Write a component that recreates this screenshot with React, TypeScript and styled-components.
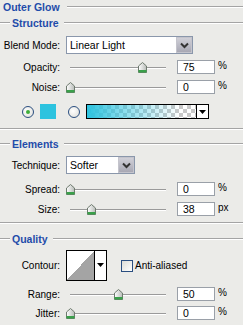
import styled, { createGlobalStyle } from 'styled-components';

const GlobalStyle = createGlobalStyle`
  html, body {
    margin: 0;
    padding: 0;
    background: #ebebe8;
  }
  body {
    font-family: 'Liberation Sans', Arial, sans-serif;
    font-size: 10px;
    color: #000000;
  }
`;

const Panel = styled.div`
  width: 243px;
  height: 325px;
  display: flex;
  flex-direction: column;
  overflow: hidden;
`;

const Header = styled.div<{ $top: number }>`
  display: flex;
  align-items: center;
  height: 12px;
  margin-top: ${(p) => p.$top}px;
`;

const Etch = styled.div`
  height: 1px;
  background: #a4a4a4;
  border-bottom: 1px solid #ffffff;
`;

const LeftEtch = styled(Etch)`
  width: 10px;
  margin-right: 2px;
`;

const RightEtch = styled(Etch)<{ $gap?: number }>`
  flex: 1;
  margin-left: ${(p) => p.$gap ?? 5}px;
`;

const Title = styled.span<{ $first?: boolean }>`
  font-weight: bold;
  font-size: 10.5px;
  color: #1f4caa;
  margin-left: ${(p) => (p.$first ? 3 : 0)}px;
`;

const Divider = styled(Etch)<{ $top: number }>`
  margin-top: ${(p) => p.$top}px;
`;

const Row = styled.div<{ $top: number; $h: number }>`
  display: flex;
  align-items: center;
  height: ${(p) => p.$h}px;
  margin-top: ${(p) => p.$top}px;
`;

const Label = styled.span`
  width: 60px;
  text-align: right;
  margin-right: 6px;
  white-space: nowrap;
`;

const SelectBox = styled.div<{ $w: number }>`
  width: ${(p) => p.$w}px;
  height: 18px;
  box-sizing: border-box;
  border: 1px solid #8a97ab;
  background: #ffffff;
  display: flex;
  align-items: center;
  font-size: 10.5px;
`;

const SelectText = styled.span`
  flex: 1;
  padding-left: 3px;
`;

const SelectButton = styled.div`
  width: 16px;
  height: 16px;
  box-sizing: border-box;
  background: linear-gradient(#d0d0d8, #a8a8b4);
  border: 1px solid #c4c4cc;
  display: flex;
  align-items: center;
  justify-content: center;
`;

const SliderWrap = styled.div`
  position: relative;
  width: 104px;
  height: 12px;
  margin-right: 7px;
`;

const Track = styled.div`
  position: absolute;
  left: 4px;
  right: 4px;
  top: 6px;
  height: 1px;
  background: #9a9a9a;
  border-bottom: 1px solid #ffffff;
`;

const Thumb = styled.svg`
  position: absolute;
  top: 1px;
  width: 9px;
  height: 11px;
`;

const NumInput = styled.div`
  width: 38px;
  height: 14px;
  box-sizing: border-box;
  border: 1px solid #9aa0a8;
  background: #ffffff;
  padding-left: 5px;
  line-height: 12px;
  font-size: 10.5px;
`;

const Unit = styled.span`
  margin-left: 3px;
  margin-top: -3px;
`;

const ColorRow = styled.div`
  display: flex;
  align-items: center;
  height: 15px;
  margin-top: 10px;
  padding-left: 22px;
`;

const Radio = styled.div<{ $on?: boolean }>`
  width: 12px;
  height: 12px;
  box-sizing: border-box;
  border-radius: 50%;
  border: 1px solid #2a4e80;
  background: radial-gradient(circle at 40% 40%, #ffffff, #dcdcd6);
  display: flex;
  align-items: center;
  justify-content: center;
  margin-right: 6px;
  &::after {
    content: '';
    width: 4px;
    height: 4px;
    border-radius: 50%;
    background: ${(p) => (p.$on ? '#3fae3a' : 'transparent')};
  }
`;

const Swatch = styled.div`
  width: 16px;
  height: 15px;
  background: #2dc3df;
  margin-right: 12px;
`;

const GradientBar = styled.div`
  width: 123px;
  height: 15px;
  box-sizing: border-box;
  border: 1px solid #000000;
  display: flex;
`;

const GradientFill = styled.div`
  flex: 1;
  background:
    linear-gradient(90deg, #2dc3df 0%, rgba(45, 195, 223, 0.6) 30%, rgba(45, 195, 223, 0) 85%),
    repeating-conic-gradient(#c8c8c8 0% 25%, #ffffff 0% 50%) 0 0 / 8px 8px;
`;

const ArrowCell = styled.div<{ $top?: boolean }>`
  width: 11px;
  border-left: ${(p) => (p.$top ? 'none' : '1px solid #000000')};
  background: #ffffff;
  display: flex;
  align-items: ${(p) => (p.$top ? 'flex-start' : 'center')};
  justify-content: center;
  padding-top: ${(p) => (p.$top ? 12 : 0)}px;
`;

const ContourBox = styled.div`
  width: 41px;
  height: 31px;
  box-sizing: border-box;
  border: 1px solid #000000;
  display: flex;
  background: #ffffff;
  margin-right: 14px;
`;

const ContourPreview = styled.div`
  width: 28px;
  background: linear-gradient(to top left, #a4a4a4 50%, #ffffff 50%);
  border-right: 1px solid #000000;
`;

const Check = styled.div`
  width: 12px;
  height: 12px;
  box-sizing: border-box;
  border: 1px solid #2a4e80;
  background: linear-gradient(135deg, #dcdcd6, #ffffff);
  margin-right: 2px;
`;

const TriDown = () => (
  <svg width="7" height="4" viewBox="0 0 7 4">
    <polygon points="0,0 7,0 3.5,4" fill="#000000" />
  </svg>
);

const Chevron = () => (
  <svg width="9" height="7" viewBox="0 0 9 7">
    <polyline points="1,1.5 4.5,5 8,1.5" fill="none" stroke="#333" strokeWidth="2" />
  </svg>
);

const Slider = ({ pos }: { pos: number }) => (
  <SliderWrap>
    <Track />
    <Thumb viewBox="0 0 9 11" style={{ left: Math.round(pos * 96) }}>
      <defs>
        <linearGradient id="tg" x1="0" x2="1" y1="0" y2="0">
          <stop offset="0" stopColor="#ffffff" />
          <stop offset="1" stopColor="#b8bcb8" />
        </linearGradient>
      </defs>
      <polygon points="4.5,0.5 8.5,4 8.5,10.5 0.5,10.5 0.5,4" fill="url(#tg)" stroke="#6e7a6e" />
      <rect x="0.5" y="8" width="8" height="2.5" fill="#3aa04a" />
    </Thumb>
  </SliderWrap>
);

const SliderRow = ({ label, pos, value, unit, top }: { label: string; pos: number; value: string; unit: string; top: number }) => (
  <Row $top={top} $h={14}>
    <Label>{label}</Label>
    <Slider pos={pos} />
    <NumInput>{value}</NumInput>
    <Unit>{unit}</Unit>
  </Row>
);

const Select = ({ text, width }: { text: string; width: number }) => (
  <SelectBox $w={width}>
    <SelectText>{text}</SelectText>
    <SelectButton>
      <Chevron />
    </SelectButton>
  </SelectBox>
);

const App = () => {
  return (
    <Panel>
      <GlobalStyle />
      <Header $top={1}>
        <Title $first>Outer Glow</Title>
        <RightEtch $gap={7} />
      </Header>
      <Header $top={4}>
        <LeftEtch />
        <Title>Structure</Title>
        <RightEtch />
      </Header>
      <Row $top={7} $h={18}>
        <Label>Blend Mode:</Label>
        <Select text="Linear Light" width={127} />
      </Row>
      <SliderRow label="Opacity:" pos={0.75} value="75" unit="%" top={6} />
      <SliderRow label="Noise:" pos={0} value="0" unit="%" top={6} />
      <ColorRow>
        <Radio $on />
        <Swatch />
        <Radio />
        <GradientBar>
          <GradientFill />
          <ArrowCell>
            <TriDown />
          </ArrowCell>
        </GradientBar>
      </ColorRow>
      <Divider $top={9} />
      <Header $top={8}>
        <LeftEtch />
        <Title>Elements</Title>
        <RightEtch />
      </Header>
      <Row $top={6} $h={18}>
        <Label>Technique:</Label>
        <Select text="Softer" width={69} />
      </Row>
      <SliderRow label="Spread:" pos={0} value="0" unit="%" top={8} />
      <SliderRow label="Size:" pos={0.22} value="38" unit="px" top={6} />
      <Divider $top={6} />
      <Header $top={9}>
        <LeftEtch />
        <Title>Quality</Title>
        <RightEtch />
      </Header>
      <Row $top={5} $h={31}>
        <Label>Contour:</Label>
        <ContourBox>
          <ContourPreview />
          <ArrowCell $top>
            <TriDown />
          </ArrowCell>
        </ContourBox>
        <Check />
        <span>Anti-aliased</span>
      </Row>
      <SliderRow label="Range:" pos={0.5} value="50" unit="%" top={6} />
      <SliderRow label="Jitter:" pos={0} value="0" unit="%" top={5} />
    </Panel>
  );
};

export default App;
